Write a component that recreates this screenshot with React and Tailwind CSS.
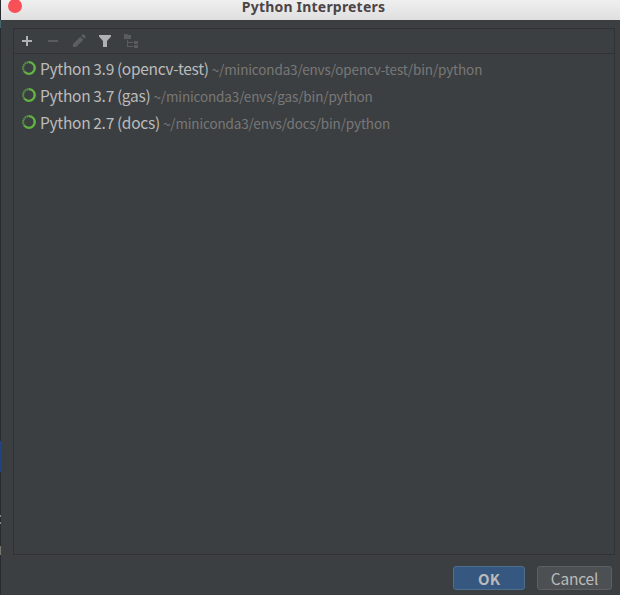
const interpreters = [
  { name: "Python 3.9 (opencv-test)", path: "~/miniconda3/envs/opencv-test/bin/python" },
  { name: "Python 3.7 (gas)", path: "~/miniconda3/envs/gas/bin/python" },
  { name: "Python 2.7 (docs)", path: "~/miniconda3/envs/docs/bin/python" },
];

function CondaIcon() {
  return (
    <svg width="16" height="16" viewBox="0 0 16 16" fill="none" stroke="#62b543" className="shrink-0">
      <path d="M7.5 2.2A5.8 5.8 0 1 1 3.4 11.6" strokeWidth="2.2" />
      <path d="M3.4 11.6A5.8 5.8 0 0 1 7.5 2.2" strokeWidth="2" strokeDasharray="1.5 0.6" opacity="0.8" />
    </svg>
  );
}

function Toolbar() {
  return (
    <div className="flex h-[25px] shrink-0 items-center gap-[10px] border-b border-[#323232] pl-[5px]">
      <svg width="16" height="16" viewBox="0 0 16 16" fill="#afb1b3">
        <path d="M7 3h2v4h4v2H9v4H7V9H3V7h4z" />
      </svg>
      <svg width="16" height="16" viewBox="0 0 16 16" fill="#5a5c5d">
        <path d="M3 7h10v2H3z" />
      </svg>
      <svg width="16" height="16" viewBox="0 0 16 16" fill="#5c5e5f">
        <path d="M2 11l7.3-7.3 3 3L5 14H2zM10.2 2.8l1-1a1.5 1.5 0 0 1 2.1 0l.9.9a1.5 1.5 0 0 1 0 2.1l-1 1z" />
      </svg>
      <svg width="16" height="16" viewBox="0 0 16 16" fill="#afb1b3">
        <path d="M2 2h12v1.5L10 8v6H6V8L2 3.5z" />
      </svg>
      <svg width="16" height="16" viewBox="0 0 16 16" fill="#5a5c5d">
        <path d="M1 1h3l1 1h3v4H1zM4 7h1v2h5v1H5v3h5v1H4zM11 8h4v3h-4zM11 12h4v3h-4z" />
      </svg>
    </div>
  );
}

export default function App() {
  return (
    <div className="flex h-[595px] w-[620px] overflow-hidden bg-[#3c3f41] font-['Noto_Sans_CJK_SC',sans-serif]">
      <div className="flex w-px shrink-0 flex-col bg-[#292a32]">
        <div className="mt-5 h-2 bg-[#426570]" />
        <div className="mt-[413px] h-[31px] bg-[#214283]" />
        <div className="mt-[43px] h-[2px] bg-[#85878a]" />
        <div className="mt-[5px] h-[2px] bg-[#85878a]" />
        <div className="mt-[22px] h-[9px] bg-[#77786f]" />
      </div>
      <div className="flex min-w-0 flex-1 flex-col">
        <header className="relative flex h-5 shrink-0 justify-center bg-linear-to-b from-[#efefef] to-[#dfdfdf]">
          <span className="absolute -top-[1px] left-[7px] size-[14px] rounded-full bg-[#f75057]" />
          <h1 className="pl-[6px] font-['Noto_Sans',sans-serif] text-[14px] leading-[14px] font-bold tracking-[0.2px] whitespace-nowrap text-[#4c4546]">
            Python Interpreters
          </h1>
        </header>
        <main className="mt-2 mr-[5px] ml-3 flex h-[527px] shrink-0 flex-col border border-[#323232]">
          <Toolbar />
          <ul className="pt-[2px]">
            {interpreters.map((item) => (
              <li key={item.name} className="flex h-[27px] items-center pl-[7px] whitespace-nowrap">
                <span className="-mt-[3px]"><CondaIcon /></span>
                <span className="-mt-[2px] ml-[3px] text-[15.5px] leading-[27px] tracking-[-0.27px] [word-spacing:-0.3px] text-[#bbbbbb]">{item.name}</span>
                <span className="ml-[3px] text-[13.5px] leading-[27px] tracking-[-0.14px] text-[#787878]">{item.path}</span>
              </li>
            ))}
          </ul>
        </main>
        <footer className="mt-[11px] flex justify-end gap-3 pr-2">
          <button className="flex h-6 w-[72px] items-center justify-center rounded-[3px] border border-[#4c708c] bg-[#365880] pt-[2px] text-[15px] font-bold text-[#bbbbbb]">
            OK
          </button>
          <button className="flex h-6 w-[75px] items-center justify-center rounded-[3px] border border-[#5e6060] bg-[#4c5052] pt-[2px] text-[15.5px] tracking-[-0.2px] text-[#bbbbbb]">
            Cancel
          </button>
        </footer>
      </div>
    </div>
  );
}
